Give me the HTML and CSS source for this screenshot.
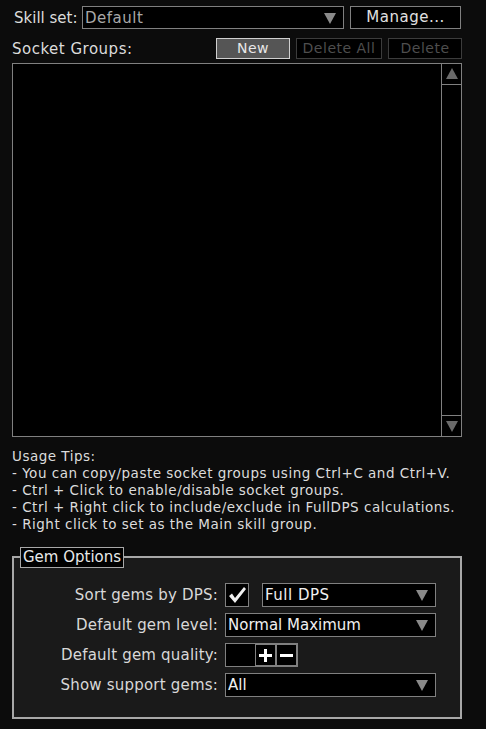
FILE: index.html
```html
<!DOCTYPE html>
<html lang="en">
<head>
    <meta charset="UTF-8">
    <title>Skills</title>
    <link rel="stylesheet" href="styles.css">
</head>
<body>

    <div class="panel">
        <div class="row top-row">
            <span class="label set-label">Skill set:</span>
            <div class="dropdown set-select">
                <span class="dim">Default</span>
                <svg class="arrow" width="12" height="12" viewBox="0 0 12 12"><path d="M0 1 H12 L6 12 Z" fill="#8a8a8a"/></svg>
            </div>
            <div class="btn manage">Manage...</div>
        </div>

        <div class="row group-row">
            <span class="label grow">Socket Groups:</span>
            <div class="btn active new">New</div>
            <div class="btn disabled del-all">Delete All</div>
            <div class="btn disabled del">Delete</div>
        </div>

        <div class="list">
            <div class="list-body"></div>
            <div class="scrollbar">
                <div class="scroll-btn">
                    <svg width="12" height="12" viewBox="0 0 12 12"><path d="M0 11 H12 L6 0 Z" fill="#6a6a6a"/></svg>
                </div>
                <div class="scroll-track"></div>
                <div class="scroll-btn">
                    <svg width="12" height="12" viewBox="0 0 12 12"><path d="M0 1 H12 L6 12 Z" fill="#6a6a6a"/></svg>
                </div>
            </div>
        </div>

        <div class="tips">
            Usage Tips:<br>
            - You can copy/paste socket groups using Ctrl+C and Ctrl+V.<br>
            - Ctrl + Click to enable/disable socket groups.<br>
            - Ctrl + Right click to include/exclude in FullDPS calculations.<br>
            - Right click to set as the Main skill group.
        </div>

        <div class="groupbox">
            <div class="group-title">Gem Options</div>

            <div class="opt-row">
                <span class="opt-label">Sort gems by DPS:</span>
                <div class="check">
                    <svg width="20" height="20" viewBox="0 0 20 20"><path d="M2 11 L5 8.5 L8 13 L17 2 L19 4 L8 18 Z" fill="#f0f0f0"/></svg>
                </div>
                <div class="dropdown dps-select">
                    <span>Full DPS</span>
                    <svg class="arrow" width="12" height="12" viewBox="0 0 12 12"><path d="M0 1 H12 L6 12 Z" fill="#8a8a8a"/></svg>
                </div>
            </div>

            <div class="opt-row">
                <span class="opt-label">Default gem level:</span>
                <div class="dropdown wide-select">
                    <span>Normal Maximum</span>
                    <svg class="arrow" width="12" height="12" viewBox="0 0 12 12"><path d="M0 1 H12 L6 12 Z" fill="#8a8a8a"/></svg>
                </div>
            </div>

            <div class="opt-row">
                <span class="opt-label">Default gem quality:</span>
                <div class="spinner">
                    <div class="spin-input"></div>
                    <div class="spin-btn">
                        <svg width="13" height="13" viewBox="0 0 13 13"><path d="M5 0 H8 V5 H13 V8 H8 V13 H5 V8 H0 V5 H5 Z" fill="#fff"/></svg>
                    </div>
                    <div class="spin-btn">
                        <svg width="13" height="13" viewBox="0 0 13 13"><path d="M0 5 H13 V8 H0 Z" fill="#fff"/></svg>
                    </div>
                </div>
            </div>

            <div class="opt-row">
                <span class="opt-label">Show support gems:</span>
                <div class="dropdown wide-select">
                    <span>All</span>
                    <svg class="arrow" width="12" height="12" viewBox="0 0 12 12"><path d="M0 1 H12 L6 12 Z" fill="#8a8a8a"/></svg>
                </div>
            </div>
        </div>
    </div>

</body>
</html>
```

FILE: styles.css
```css
body {
    background-color: #0c0c0c;
    font-family: "DejaVu Sans", sans-serif;
    letter-spacing: 0.5px;
    color: #dcdcdc;
    margin: 0;
    padding: 0;
}

.panel {
    width: 450px;
    margin-left: 12px;
    padding-top: 6px;
}

.row {
    display: flex;
    align-items: center;
}

.label {
    font-size: 15px;
}

.grow {
    flex: 1;
}

.top-row {
    height: 23px;
    gap: 6px;
}

.set-label {
    width: 70px;
    margin-right: -6px;
    padding-left: 2px;
    box-sizing: border-box;
    letter-spacing: 0;
}

.dropdown {
    box-sizing: border-box;
    height: 24px;
    border: 1px solid #808080;
    background-color: #000;
    display: flex;
    align-items: center;
    justify-content: space-between;
    padding: 0 7px 0 2px;
    font-size: 15px;
    color: #f0f0f0;
}

.set-select {
    width: 262px;
    height: 23px;
}

.dim {
    color: #a8a8a8;
}

.btn {
    box-sizing: border-box;
    border: 1px solid #808080;
    background-color: #000;
    text-align: center;
    font-size: 15px;
    color: #e0e0e0;
}

.manage {
    width: 111px;
    height: 23px;
    line-height: 21px;
}

.group-row {
    margin-top: 9px;
    height: 21px;
    gap: 6px;
}

.group-row .btn {
    height: 21px;
    line-height: 19px;
    font-size: 14px;
}

.new {
    width: 74px;
}

.del-all {
    width: 86px;
}

.del {
    width: 74px;
}

.btn.active {
    background-color: #555;
    border-color: #d0d0d0;
    color: #e8e8e8;
}

.btn.disabled {
    border-color: #3c3c3c;
    color: #4e4e4e;
}

.list {
    margin-top: 4px;
    height: 374px;
    box-sizing: border-box;
    border: 1px solid #808080;
    background-color: #000;
    display: flex;
}

.list-body {
    flex: 1;
}

.scrollbar {
    width: 19px;
    border-left: 1px solid #808080;
    display: flex;
    flex-direction: column;
}

.scroll-btn {
    height: 20px;
    display: flex;
    align-items: center;
    justify-content: center;
}

.scroll-btn:first-child {
    border-bottom: 1px solid #808080;
}

.scroll-btn:last-child {
    border-top: 1px solid #808080;
}

.scroll-track {
    flex: 1;
}

.tips {
    margin-top: 11px;
    font-size: 13.5px;
    line-height: 17px;
    color: #dcdcdc;
}

.groupbox {
    position: relative;
    margin-top: 23px;
    height: 163px;
    box-sizing: border-box;
    border: 2px solid #a8a8a8;
    background-color: #1a1a1a;
    padding-top: 25px;
}

.group-title {
    position: absolute;
    left: 6px;
    top: -11px;
    height: 21px;
    box-sizing: border-box;
    padding: 0 2px;
    border: 1px solid #a8a8a8;
    background-color: #000;
    font-size: 15px;
    line-height: 19px;
    letter-spacing: 0;
    color: #e8e8e8;
}

.opt-row {
    display: flex;
    align-items: center;
    gap: 7px;
    height: 24px;
    margin-bottom: 6px;
}

.opt-label {
    width: 204px;
    text-align: right;
    font-size: 15px;
    letter-spacing: 0.2px;
    color: #d8d8d8;
}

.check {
    box-sizing: border-box;
    width: 24px;
    height: 24px;
    border: 1px solid #808080;
    background-color: #000;
    display: flex;
    align-items: center;
    justify-content: center;
    margin-right: 6px;
}

.dps-select {
    width: 174px;
}

.wide-select {
    width: 211px;
    letter-spacing: 0;
}

.spinner {
    box-sizing: border-box;
    display: flex;
    height: 24px;
    border: 1px solid #808080;
    background-color: #000;
}

.spin-input {
    width: 29px;
}

.spin-btn {
    box-sizing: border-box;
    width: 21px;
    height: 22px;
    border: 1px solid #808080;
    display: flex;
    align-items: center;
    justify-content: center;
}
```
